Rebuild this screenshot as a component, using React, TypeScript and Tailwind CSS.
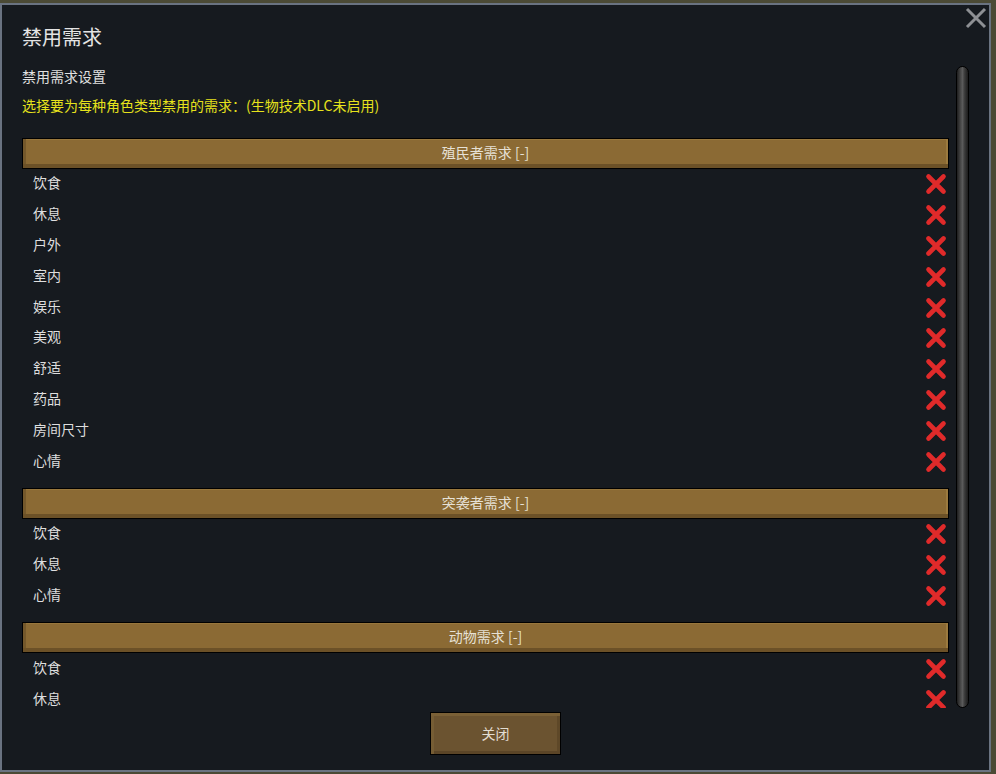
import React from "react";

interface Section {
  title: string;
  items: string[];
}

const sections: Section[] = [
  {
    title: "殖民者需求 [-]",
    items: ["饮食", "休息", "户外", "室内", "娱乐", "美观", "舒适", "药品", "房间尺寸", "心情"],
  },
  { title: "突袭者需求 [-]", items: ["饮食", "休息", "心情"] },
  { title: "动物需求 [-]", items: ["饮食", "休息"] },
];

const RedCross = () => (
  <svg width="22" height="22" viewBox="0 0 22 22">
    <path
      d="M3.5 3.5 L18.5 18.5 M18.5 3.5 L3.5 18.5"
      stroke="#e02a2a"
      strokeWidth="4.6"
      strokeLinecap="round"
    />
  </svg>
);

const SectionHeader: React.FC<{ title: string }> = ({ title }) => (
  <div className="h-[31px] border border-black bg-[#8b6a34] shadow-[inset_0_-4px_0_#6c5127,inset_3px_0_0_#74582b,inset_-2px_0_0_#9c7a3e,inset_0_1px_0_#98773c] flex items-center justify-center pb-[2px] text-[14px] text-[#e6e1d6]">
    {title}
  </div>
);

const App: React.FC = () => {
  return (
    <div
      className="w-[996px] h-[774px] bg-[#4b4a35] pt-[3px] overflow-hidden"
      style={{ fontFamily: '"Noto Sans CJK SC", "Noto Sans", sans-serif' }}
    >
      <div className="relative w-[991px] h-[769px] border-2 border-[#6a7381] bg-[#161a1f] flex flex-col pl-[20px]">
        {/* close icon */}
        <div className="absolute right-[2px] top-[2px]">
          <svg width="22" height="22" viewBox="0 0 22 22">
            <path d="M2 2 L20 20 M20 2 L2 20" stroke="#8e9094" strokeWidth="3" />
          </svg>
        </div>

        <div className="mt-[18px] text-[20px] leading-[28px] text-[#e4e4e4]">禁用需求</div>

        <div className="mt-[15px] flex h-[642px]">
          <div className="w-[927px] flex flex-col">
            <div className="text-[14px] leading-[20px] text-[#e0e0e0]">禁用需求设置</div>
            <div className="mt-[9px] text-[14px] leading-[20px] text-[#e6e21c]">
              选择要为每种角色类型禁用的需求：(生物技术DLC未启用)
            </div>
            <div className="mt-[23px] flex-1 overflow-hidden">
              {sections.map((s, i) => (
                <div key={s.title} className={i > 0 ? "mt-[11px]" : ""}>
                  <SectionHeader title={s.title} />
                  {s.items.map((item) => (
                    <div
                      key={item}
                      className="h-[30.8px] flex items-center justify-between pl-[11px] pr-[2px] text-[14px] text-[#dedede]"
                    >
                      <span className="-mt-[3px]">{item}</span>
                      <RedCross />
                    </div>
                  ))}
                </div>
              ))}
            </div>
          </div>
          {/* scrollbar */}
          <div className="ml-[7px] w-[13px] h-full rounded-full border border-black bg-[linear-gradient(to_right,#1e1e1e,#4a4a4a_35%,#5a5a5a_50%,#3a3a3a_70%,#1c1c1c)]" />
        </div>

        <div className="mt-[4px] flex justify-center pr-[20px]">
          <button className="w-[131px] h-[43px] border border-black bg-[#6b5330] shadow-[inset_0_3px_0_#7a6036,inset_3px_0_0_#765d34,inset_0_-3px_0_#5b4527,inset_-3px_0_0_#5e4828] text-[14px] text-[#e2ddd2]">
            关闭
          </button>
        </div>
      </div>
    </div>
  );
};

export default App;
